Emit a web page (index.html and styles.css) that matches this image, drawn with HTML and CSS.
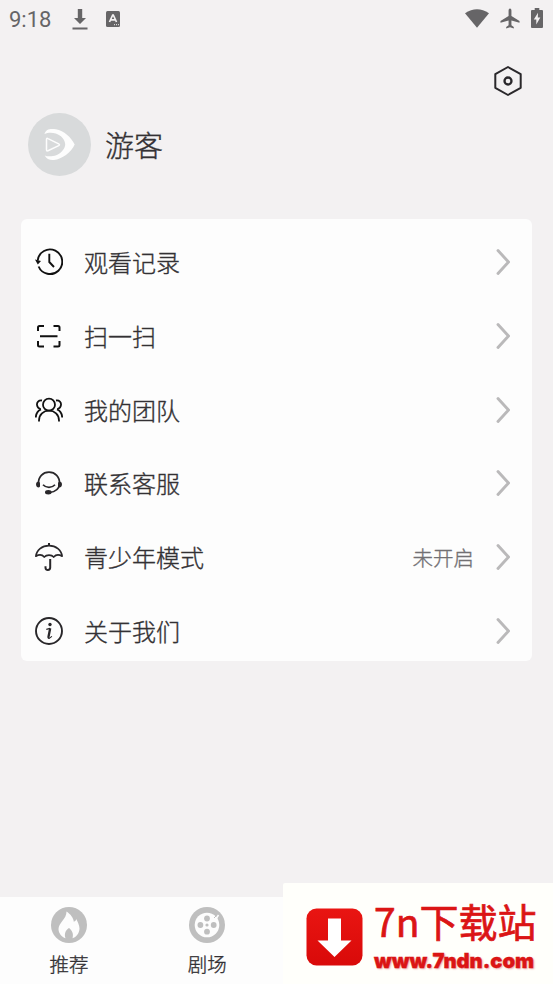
FILE: index.html
```html
<!DOCTYPE html>
<html lang="zh-CN">
<head>
<meta charset="utf-8">
<title>我的</title>
<link rel="stylesheet" href="styles.css">
</head>
<body>
<div class="screen">
  <header class="status">
    <span class="time">9:18</span>
    <svg class="st-download" width="16" height="21" viewBox="0 0 16 21"><path fill="#666567" d="M5.800 0h4.400v9H14l-6 6-6-6h3.800zM.5 18.500h15v2H.5z"/></svg>
    <svg class="st-lang" width="14" height="16" viewBox="0 0 14 16"><rect width="14" height="16" rx="1.500" fill="#666567"/><path d="M3.500 11 6.700 4h.6l3.200 7M4.800 8.800h4.400" fill="none" stroke="#f3f1f2" stroke-width="1.700"/><path d="M8 13.700h1M10 13.700h1M12 13.700h1" stroke="#f3f1f2"/></svg>
    <div class="st-right">
      <svg width="24" height="19" viewBox="0 0 24 19"><path fill="#666567" d="M0 4.200Q12-3.700 24 4.200L12 18.700z"/></svg>
      <svg width="20" height="21" viewBox="0 0 21 21"><path fill="#666567" d="M9 2q0-2 1.500-2T12 2v6l8.500 5v2L12 12.500v5l2.500 1.800V21l-4-1.200-4 1.200v-1.700L9 17.500v-5L.5 15v-2L9 8z"/></svg>
      <svg width="12" height="20" viewBox="0 0 12 20"><path fill="#666567" d="M3.700 0h4.600v2H11q1 0 1 1v16q0 1-1 1H1q-1 0-1-1V3q0-1 1-1h2.700z"/><path fill="#f3f1f2" d="M7 4.800 2.800 11.600h2.500v5l4-7H6.800z"/></svg>
    </div>
  </header>

  <div class="toolbar">
    <svg width="28" height="32" viewBox="0 0 28 32" fill="none" stroke="#2a282b" stroke-width="2"><path stroke-linejoin="round" d="M14 2 26.700 9.200v13.600L14 30 1.300 22.800V9.200z"/><circle cx="14" cy="16" r="3.500" stroke-width="2.300"/></svg>
  </div>

  <section class="profile">
    <svg width="63" height="63" viewBox="0 0 63 63"><circle cx="31.500" cy="31.500" r="31.500" fill="#d8dadb"/><path fill="#fdfdfd" fill-rule="evenodd" d="M16.500 21C18 15.500 23 15.400 28 16.300 36 18 43 24 46.700 31.500 43 39.500 34 46 26 47c-4 .4-7.500-.8-9.300-4.500 3 1.300 8 1 11.500-.3 4.500-1.700 9-6.400 9-10.700 0-5-4.400-9.500-9.500-11-3.700-1-8.200-.8-11.200.5z"/><path d="M18.500 26.500v10.300q0 1.700 1.500.9l10.700-5q1.500-.9 0-1.800L20 25.600q-1.500-.8-1.500.9z" fill="none" stroke="#fdfdfd" stroke-width="1.500"/></svg>
    <h1>游客</h1>
  </section>

  <main class="card">
    <div class="row">
      <svg class="icon" viewBox="0 0 28 28" fill="none" stroke="#111" stroke-width="1.900"><path d="M2.700 12.500A12.300 12.300 0 1 1 3.600 18.500M14.300 5.700V14l4.700 5"/><path fill="#111" stroke="none" d="M0 11.500 6 13 2.800 16.500z"/></svg>
      <span class="label">观看记录</span>
      <svg class="arrow" viewBox="0 0 14 28"><path d="m2 2.500 10.500 11.500L2 25.500"/></svg>
    </div>
    <div class="row">
      <svg class="icon" viewBox="0 0 28 28" fill="none" stroke="#111" stroke-width="2"><path d="M3 9V5.500Q3 4 4.500 4H9M18.500 4H23q1.500 0 1.500 1.500V9M24.500 19v4q0 1.500-1.500 1.500h-4.500M9 24.500H4.500Q3 24.500 3 23v-4M5 14.200h17.500"/></svg>
      <span class="label">扫一扫</span>
      <svg class="arrow" viewBox="0 0 14 28"><path d="m2 2.500 10.500 11.500L2 25.500"/></svg>
    </div>
    <div class="row">
      <svg class="icon" viewBox="0 0 28 28" fill="none" stroke="#111" stroke-width="1.800"><circle cx="14" cy="8.700" r="6"/><path d="M4 25.500v-1C4 18.500 8.500 14.700 14 14.700s10 3.800 10 9.800v1M7 4.500C3.500 4 1.700 6.500 2 9q.4 3.200 3.800 4.300M6 13.300C2.700 14.600 1 17.800.8 21.500M21 4.500c3.500-.5 5.300 2 5 4.500q-.4 3.200-3.800 4.300M22 13.300c3.300 1.300 5 4.500 5.200 8.200"/></svg>
      <span class="label">我的团队</span>
      <svg class="arrow" viewBox="0 0 14 28"><path d="m2 2.500 10.500 11.500L2 25.500"/></svg>
    </div>
    <div class="row">
      <svg class="icon" viewBox="0 0 28 28" fill="none" stroke="#29272a" stroke-width="1.700"><path d="M3.500 15C3 7.500 8 3.200 14 3.200S25 7.500 24.500 15c-.5 5-4.500 8-10 8.500M8 15.800c3 3.300 9 3.300 12 0"/><path fill="#29272a" stroke="none" d="M3 12.500q2 0 2 2v3q-1 1.500-3 .5-1-1-1-3 0-2 2-2.500zM25 12.500q-2 0-2 2v3q1 1.500 3 .5 1-1 1-3 0-2-2-2.500z"/><ellipse cx="13.300" cy="23.300" rx="3.300" ry="2.200" fill="#29272a" stroke="none"/></svg>
      <span class="label">联系客服</span>
      <svg class="arrow" viewBox="0 0 14 28"><path d="m2 2.500 10.500 11.500L2 25.500"/></svg>
    </div>
    <div class="row">
      <svg class="icon" viewBox="0 0 28 28" fill="none" stroke="#29272a" stroke-width="1.700"><path stroke-linejoin="round" d="M.9 13.200C1.500 7 7 2.600 14 2.600S26.500 7 27.100 13.200C24 11.400 20.800 11.600 18.700 14c-2.200-2.500-7.200-2.500-9.400 0C7.200 11.600 4 11.400.9 13.200z"/><path d="M14 0v3M15.200 16v8.500c0 3.300-4.700 3.300-4.700.2v-1.500" stroke-width="2"/></svg>
      <span class="label">青少年模式</span>
      <span class="value">未开启</span>
      <svg class="arrow" viewBox="0 0 14 28"><path d="m2 2.500 10.500 11.500L2 25.500"/></svg>
    </div>
    <div class="row">
      <svg class="icon" viewBox="0 0 28 28" fill="none" stroke="#29272a" stroke-width="1.900"><circle cx="14" cy="14" r="13"/><path stroke-width="2.300" d="m15.200 11.200-1.700 8.500q-.2 1.300 1 1"/><path stroke-width="1.200" d="M11.300 12.300q2-.2 3.700-.9M13.500 21.300q2.200-.2 3.300-2"/><circle cx="15" cy="7.500" r="1.700" fill="#29272a" stroke="none"/></svg>
      <span class="label">关于我们</span>
      <svg class="arrow" viewBox="0 0 14 28"><path d="m2 2.500 10.500 11.500L2 25.500"/></svg>
    </div>
  </main>

  <nav class="tabs">
    <div class="tab">
      <svg width="36" height="36" viewBox="0 0 36 36"><circle cx="18" cy="18" r="18" fill="#bfbfbf"/><path fill="#fdfdfd" d="M15.500 4.500c4 2.500 7 6.500 7.300 10.300 1.500-.5 2.200-1.500 2.400-2.800 1.300 2.500 3.300 6 3.300 9.500 0 5-4 9.200-7 9.700 1.500-5-1-8.200-3.500-10.200-3 2-5.200 5.500-3.500 10.200-3.500-1-7-4.700-7-9.200 0-6.500 8-9.500 8-17.500z"/></svg>
      <span>推荐</span>
    </div>
    <div class="tab">
      <svg width="36" height="36" viewBox="0 0 36 36"><circle cx="18" cy="18" r="18" fill="#bfbfbf"/><circle cx="18" cy="18" r="12.300" fill="#fdfdfd"/><path d="M27 12l2.500-4" stroke="#fdfdfd" stroke-width="1.500"/><path d="m25 11 3-3" stroke="#bfbfbf"/><g fill="#bfbfbf"><circle cx="18" cy="11.500" r="2.900"/><circle cx="18" cy="24.700" r="2.900"/><circle cx="11.400" cy="18" r="2.900"/><circle cx="24.700" cy="18" r="2.900"/><circle cx="18" cy="18" r="1.600"/></g></svg>
      <span>剧场</span>
    </div>
  </nav>

  <aside class="banner">
    <svg class="logo" width="57" height="58" viewBox="0 0 57 58"><defs><linearGradient id="red" x2="0" y2="1"><stop stop-color="#e91512"/><stop offset="1" stop-color="#d90a09"/></linearGradient></defs><rect x=".5" y=".5" width="56" height="57" rx="10" fill="url(#red)"/><path fill="#fff" d="M22 10.500h13v22h10.500L28.500 49 11.500 32.500H22z"/></svg>
    <div class="brand">
      <span class="name">7n下载站</span>
      <span class="url">www.7ndn.com</span>
    </div>
  </aside>
</div>
</body>
</html>
```
FILE: styles.css
```css
* { box-sizing: border-box; }
body {
  margin: 0;
  background: #f3f1f2;
  color: #333134;
  font-family: "Noto Sans CJK SC", sans-serif;
  font-weight: 300;
  -webkit-text-stroke: 0.35px currentColor;
}
.screen {
  position: relative;
  height: 984px;
  display: flex;
  flex-direction: column;
  overflow: hidden;
}
svg { display: block; flex: none; }
.status {
  height: 38px;
  display: flex;
  align-items: center;
  padding: 0 10px 2px 9px;
  color: #666567;
  -webkit-text-stroke: 0;
}
.time {
  width: 63px;
  font: 400 22px/24px Roboto, sans-serif;
  padding-top: 3px;
}
.st-download { margin-top: 2px; }
.st-lang { margin: 2px 0 0 18px; }
.st-right {
  display: flex;
  align-items: center;
  gap: 11px;
  margin: 0 0 0 auto;
}
.toolbar {
  height: 75px;
  display: flex;
  justify-content: flex-end;
  padding: 27px 31px 0 0;
}
.profile {
  height: 106px;
  display: flex;
  align-items: flex-start;
  gap: 14px;
  padding-left: 28px;
}
h1 {
  margin: 0;
  font-size: 29px;
  line-height: 63px;
  font-weight: 300;
}
.card {
  flex: none;
  height: 442px;
  margin: 0 21px;
  padding: 13px 22px 0 14px;
  display: flex;
  flex-direction: column;
  justify-content: space-between;
  border-radius: 6px;
  background: #fdfdfd;
}
.row {
  height: 60px;
  display: flex;
  align-items: center;
}
.icon { width: 28px; height: 28px; margin-right: 21px; }
.label { font-size: 24px; line-height: 60px; }
.value {
  margin: 0 22px 0 auto;
  font-size: 20.5px;
  color: #727073;
}
.arrow {
  width: 14px;
  height: 28px;
  margin-left: auto;
  fill: none;
  stroke: #bab9ba;
  stroke-width: 2.9;
  stroke-linecap: round;
}
.value + .arrow { margin-left: 0; }
.tabs {
  height: 87px;
  margin-top: auto;
  display: grid;
  grid-template-columns: repeat(4, 1fr);
  background: #fdfdfd;
}
.tab {
  display: flex;
  flex-direction: column;
  align-items: center;
  padding-top: 10px;
  font-size: 19.5px;
  line-height: 41px;
}
.banner {
  position: absolute;
  right: 0;
  bottom: 0;
  width: 270px;
  height: 101px;
  display: flex;
  gap: 11px;
  padding-left: 23px;
  border-radius: 2px 0 0 0;
  background: #fffffb;
}
.logo { margin-top: 25px; }
.brand {
  display: flex;
  flex-direction: column;
  color: #db1515;
  white-space: nowrap;
}
.name {
  margin-top: 14px;
  height: 50px;
  font-size: 39px;
  line-height: 47px;
  font-weight: 400;
  -webkit-text-stroke: 0.7px currentColor;
}
.url {
  font: 900 20.2px/28px Inter, sans-serif;
  text-shadow: 1px 1px 2px #e9a5a5;
}
```
